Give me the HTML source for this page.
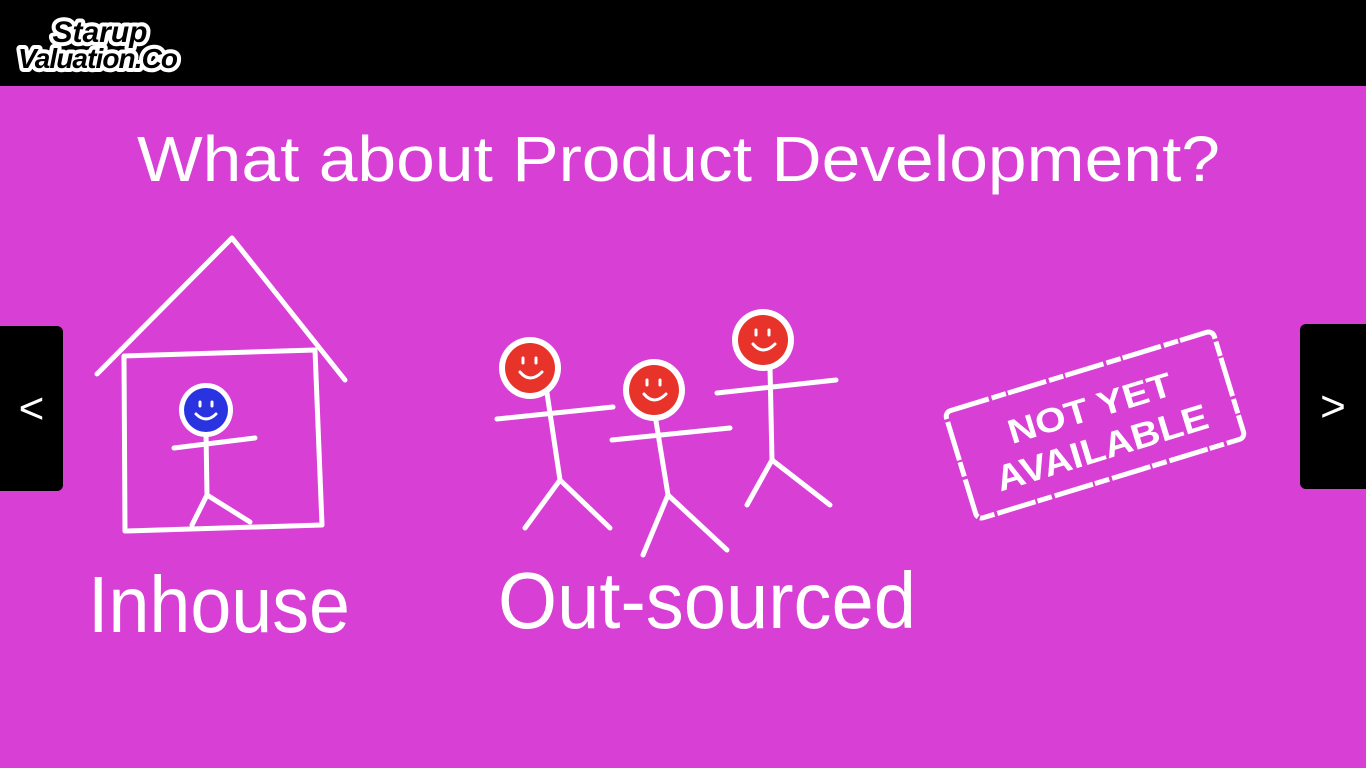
<!DOCTYPE html>
<html><head><style>
body{margin:0;width:1366px;height:768px;overflow:hidden;background:#d83fd4;font-family:"Liberation Sans",sans-serif;position:relative}
.top{position:absolute;left:0;top:0;width:1366px;height:86px;background:#000}
.nav{position:absolute;background:#000;color:#fff;font-size:44px;display:flex;align-items:center;justify-content:center;font-weight:100}
</style></head><body>
<div class="top"></div>
<svg width="1366" height="768" style="position:absolute;left:0;top:0">
<g font-family="Liberation Sans, sans-serif">
<text x="100" y="42" font-size="30" font-style="italic" font-weight="bold" fill="#fff" stroke="#fff" stroke-width="8" stroke-linejoin="round" text-anchor="middle">Starup</text>
<text x="100" y="42" font-size="30" font-style="italic" font-weight="bold" fill="#000" text-anchor="middle">Starup</text>
<text x="98" y="68" font-size="28" font-style="italic" font-weight="bold" fill="#fff" stroke="#fff" stroke-width="8" stroke-linejoin="round" text-anchor="middle" textLength="160">Valuation.Co</text>
<text x="98" y="68" font-size="28" font-style="italic" font-weight="bold" fill="#000" text-anchor="middle" textLength="160">Valuation.Co</text>
<text x="137" y="181" font-size="64" fill="#fff" textLength="1083" lengthAdjust="spacingAndGlyphs">What about Product Development?</text>
<text x="88" y="632" font-size="80" fill="#fff" textLength="262" lengthAdjust="spacingAndGlyphs">Inhouse</text>
<text x="498" y="628" font-size="80" fill="#fff" textLength="418" lengthAdjust="spacingAndGlyphs">Out-sourced</text>
</g>
<g stroke="#fff" stroke-width="5" fill="none" stroke-linecap="round" stroke-linejoin="round">
<path d="M97 374 L232 238 L345 380"/>
<path d="M124 356 L315 350 L322 525 L125 531 Z"/>
<path d="M206 433 L207 495 M174 448 L255 438 M207 495 L192 525 M207 495 L250 522"/>
<path d="M547 393 L560 480 M497 419 L613 407 M560 480 L525 528 M560 480 L610 528"/>
<path d="M655 415 L668 495 M612 440 L730 428 M668 495 L643 555 M668 495 L727 550"/>
<path d="M770 367 L772 460 M717 393 L836 380 M772 460 L747 505 M772 460 L830 505"/>
</g>
<circle cx="206" cy="410" r="27" fill="#fff"/><circle cx="206" cy="410" r="22" fill="#2a33e0"/>
<g fill="#fff"><circle cx="530" cy="368" r="31"/><circle cx="654" cy="390" r="31"/><circle cx="763" cy="340" r="31"/></g>
<g fill="#e8332b"><circle cx="530" cy="368" r="25"/><circle cx="654" cy="390" r="25"/><circle cx="763" cy="340" r="25"/></g>
<g stroke="#fff" stroke-width="3" fill="none" stroke-linecap="round">
<path d="M196 414 Q206 424 216 414 M200 402 v4 M212 402 v4"/>
<path d="M520 372 Q530 384 542 372 M523 358 v5 M536 358 v5"/>
<path d="M644 394 Q654 406 666 394 M647 380 v5 M660 380 v5"/>
<path d="M753 344 Q763 356 775 344 M756 330 v5 M769 330 v5"/>
</g>
<g transform="translate(1095,425) rotate(-17)">
<rect x="-140" y="-56" width="280" height="112" rx="6" fill="none" stroke="#fff" stroke-width="5" stroke-dasharray="40 3 15 2"/>
<text x="0" y="-6" font-size="34" font-weight="bold" fill="#fff" text-anchor="middle" font-family="Liberation Sans, sans-serif" textLength="170" lengthAdjust="spacingAndGlyphs">NOT YET</text>
<text x="0" y="36" font-size="36" font-weight="bold" fill="#fff" text-anchor="middle" font-family="Liberation Sans, sans-serif" textLength="220" lengthAdjust="spacingAndGlyphs">AVAILABLE</text>
</g>
</svg>
<div class="nav" style="left:0;top:326px;width:63px;height:165px;border-radius:0 6px 6px 0">&lt;</div>
<div class="nav" style="left:1300px;top:324px;width:66px;height:165px;border-radius:6px 0 0 6px">&gt;</div>
</body></html>
